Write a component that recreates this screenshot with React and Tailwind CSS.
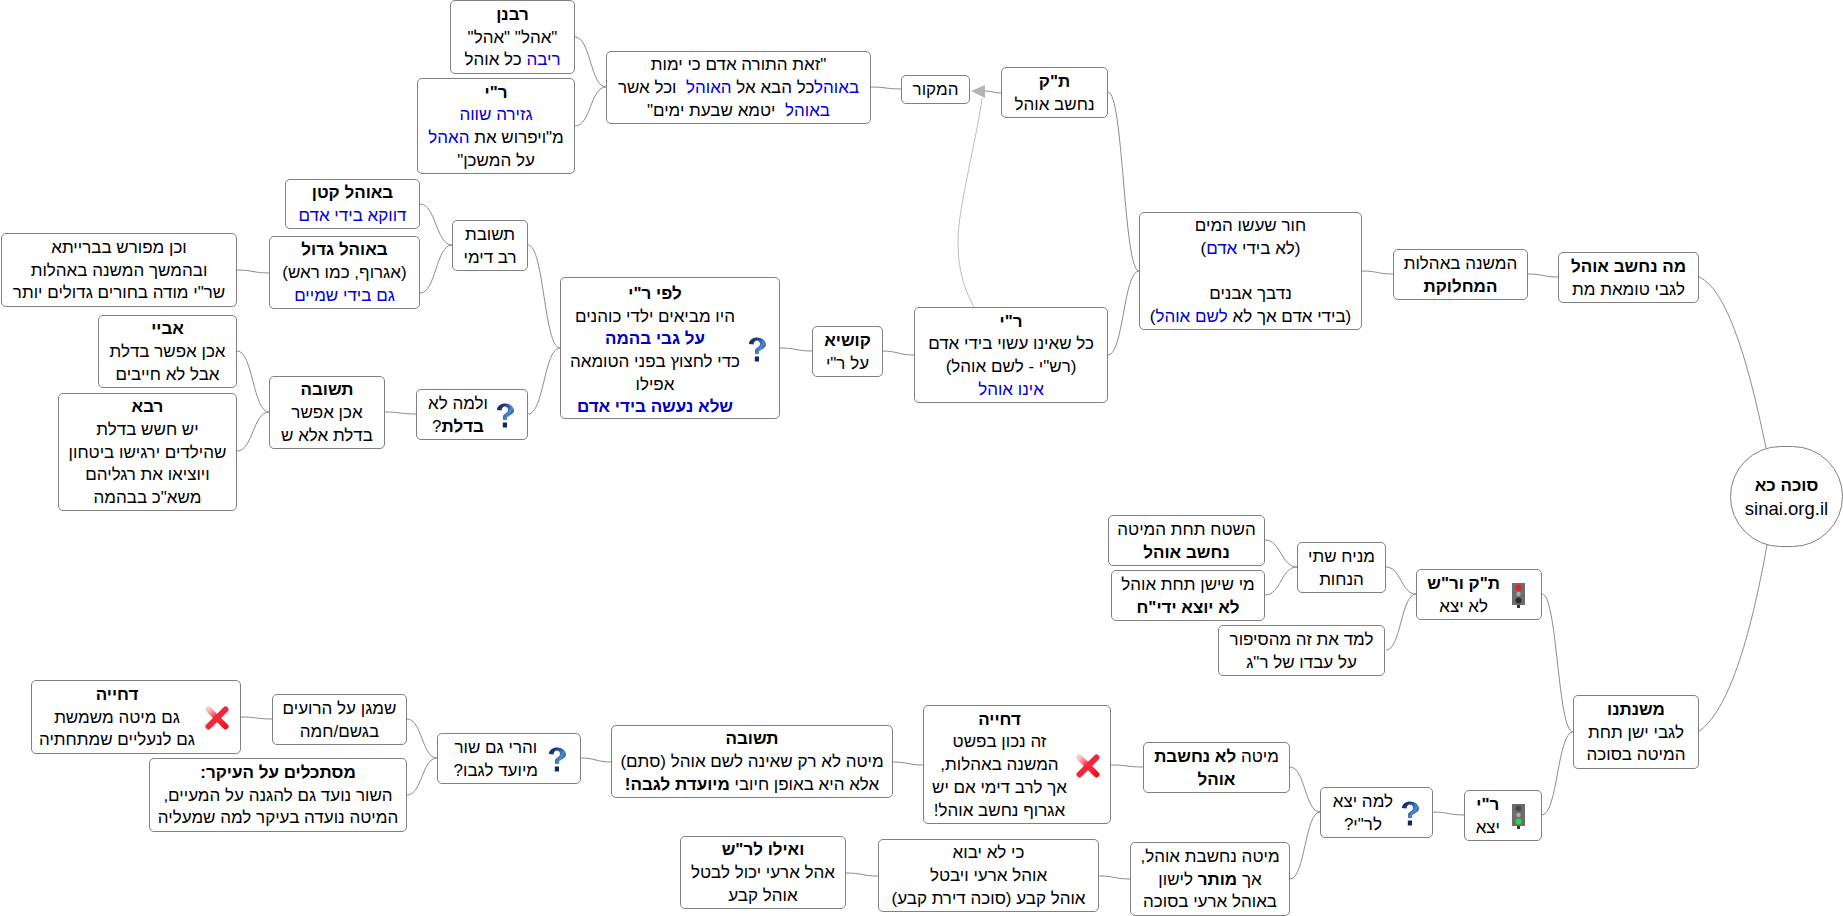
import React from 'react';

// child right edge -> parent left edge, at the mid height of each box
const links = [
  [575, 37, 606, 87], [575, 126, 606, 87], [871, 87, 901, 89],
  [1108, 92, 1139, 271], [1108, 355, 1139, 271], [1362, 271, 1393, 274], [1528, 274, 1558, 277],
  [780, 348, 812, 351], [882, 351, 914, 355],
  [528, 245, 560, 348], [528, 414, 560, 348],
  [420, 204, 452, 245], [420, 293, 452, 245], [237, 270, 269, 273],
  [385, 412, 416, 414], [237, 351, 269, 412], [237, 451, 269, 412],
  [1542, 594, 1573, 732], [1542, 815, 1573, 732],
  [1386, 567, 1416, 594], [1386, 650, 1416, 594],
  [1265, 540, 1297, 567], [1265, 595, 1297, 567],
  [1433, 812, 1464, 815], [1290, 767, 1320, 812], [1290, 879, 1320, 812],
  [1111, 765, 1143, 767], [893, 762, 923, 765], [581, 758, 611, 762],
  [407, 719, 437, 758], [407, 795, 437, 758], [241, 717, 272, 719],
  [1099, 876, 1130, 879], [846, 873, 878, 876],
];

const curve = ([x1, y1, x2, y2]) => {
  const c = (x2 - x1) * 0.5;
  return `M${x1} ${y1}C${x1 + c} ${y1} ${x2 - c} ${y2} ${x2} ${y2}`;
};

const Connectors = () => (
  <svg className="absolute left-0 top-0" width="1843" height="916" fill="none" stroke="#8c8c8c" strokeWidth="1">
    {links.map((l, i) => <path key={i} d={curve(l)} />)}
    <path d="M1699 277C1730 290 1752 380 1766 448" />
    <path d="M1698 732C1728 712 1750 640 1767 545" />
    <path d="M1001 93C993 93 992 91 984 91" />
    <path d="M974 307C960 282 956 255 959 225C963 190 978 130 982 98" stroke="#bdbdbd" />
    <polygon points="971,91 985,85 985,98" fill="#b4b4b4" stroke="none" />
  </svg>
);

const B = ({ children }) => <b className="font-bold">{children}</b>;
const Blue = ({ children }) => <span className="text-[#0000d8]">{children}</span>;
const BB = ({ children }) => <b className="font-bold text-[#0000c0]">{children}</b>;

const Question = () => (
  <svg width="18" height="25" viewBox="0 0 18 25" className="shrink-0">
    <defs>
      <linearGradient id="qm" x1="0" y1="0.1" x2="1" y2="0.7">
        <stop offset="0" stopColor="#10205a" />
        <stop offset="0.35" stopColor="#1f3f86" />
        <stop offset="0.75" stopColor="#4a8ccc" />
        <stop offset="1" stopColor="#1c3a80" />
      </linearGradient>
    </defs>
    <path d="M1 7C1 3 5 .5 9 .5C14 .5 18 3.5 18 7.5C18 11 13 12.5 11 14.5L11 17L7 17L7 13.5C7 11 12 10 12 7C12 5 10.5 3.5 9 3.5C7 3.5 6 5 5.5 7.5Z" fill="url(#qm)" />
    <rect x="6.8" y="19.5" width="4.2" height="5" fill="#16265f" />
  </svg>
);

const Cross = () => (
  <svg width="24" height="24" viewBox="0 0 24 24" className="shrink-0">
    <defs>
      <linearGradient id="xm" x1="0" y1="0" x2="1" y2="1">
        <stop offset="0" stopColor="#f9c4cc" />
        <stop offset="0.4" stopColor="#f5404f" />
        <stop offset="1" stopColor="#ee0f20" />
      </linearGradient>
    </defs>
    <path d="M3.5 3.5L20.5 20.5" stroke="url(#xm)" strokeWidth="6" strokeLinecap="round" />
    <path d="M20.5 3.5L3.5 20.5" stroke="#f2263a" strokeWidth="6" strokeLinecap="round" />
  </svg>
);

const Light = ({ on }) => (
  <svg width="13" height="25" viewBox="0 0 13 25" className="shrink-0">
    <rect x="0" y="0" width="13" height="22" fill="#6d6d70" />
    <rect x="5" y="22" width="3" height="3" fill="#333" />
    <circle cx="6.5" cy="4.5" r="3" fill={on === 'red' ? '#f01a24' : '#4a4a4c'} />
    <circle cx="6.5" cy="11" r="2.2" fill="#aaa" />
    <circle cx="6.5" cy="17.5" r="3" fill={on === 'green' ? '#22e03a' : '#2c2c2e'} />
  </svg>
);

const box = 'absolute flex items-center justify-center rounded-[5px] border border-[#808080] bg-white pt-[2px] text-center';
const iconBox = 'absolute flex items-center justify-start rounded-[5px] border border-[#808080] bg-white pt-[2px] text-center';

const App = () => (
  <div dir="rtl" className="relative h-[916px] w-[1843px] overflow-hidden bg-white font-['Liberation_Sans',Arial,sans-serif] text-[17px] leading-[22.67px] text-black">
    <Connectors />

    <div className={`${box} left-[450px] top-[0px] h-[74px] w-[125px]`}>
      <div><div><B>רבנן</B></div><div>"אהל" "אהל"</div><div><Blue>ריבה</Blue> כל אוהל</div></div>
    </div>
    <div className={`${box} left-[417px] top-[78px] h-[96px] w-[158px]`}>
      <div><div><B>ר"י</B></div><div><Blue>גזירה שווה</Blue></div><div>מ"ויפרוש את <Blue>האהל</Blue></div><div>על המשכן"</div></div>
    </div>
    <div className={`${box} left-[606px] top-[51px] h-[73px] w-[265px]`}>
      <div><div>"זאת התורה אדם כי ימות</div><div><Blue>באוהל</Blue>כל הבא אל <Blue>האוהל</Blue>&nbsp; וכל אשר</div><div><Blue>באוהל</Blue>&nbsp; יטמא שבעת ימים"</div></div>
    </div>
    <div className={`${box} left-[901px] top-[75px] h-[29px] w-[69px]`}>המקור</div>
    <div className={`${box} left-[1001px] top-[67px] h-[51px] w-[107px]`}>
      <div><div><B>ת"ק</B></div><div>נחשב אוהל</div></div>
    </div>
    <div className={`${box} left-[1139px] top-[212px] h-[118px] w-[223px]`}>
      <div><div>חור שעשו המים</div><div>(לא בידי <Blue>אדם</Blue>)</div><div>&nbsp;</div><div>נדבך אבנים</div><div>(בידי אדם אך לא <Blue>לשם אוהל</Blue>)</div></div>
    </div>
    <div className={`${box} left-[1393px] top-[249px] h-[51px] w-[135px]`}>
      <div><div>המשנה באהלות</div><div><B>המחלוקת</B></div></div>
    </div>
    <div className={`${box} left-[1558px] top-[252px] h-[51px] w-[141px]`}>
      <div><div><B>מה נחשב אוהל</B></div><div>לגבי טומאת מת</div></div>
    </div>
    <div className="absolute left-[1730px] top-[446px] flex h-[101px] w-[113px] items-center justify-center rounded-full border border-[#808080] bg-white pt-[2px] text-center">
      <div><div><B>סוכה כא</B></div><div className="text-[18.5px]">sinai.org.il</div></div>
    </div>

    <div className={`${box} left-[914px] top-[307px] h-[96px] w-[194px]`}>
      <div><div><B>ר"י</B></div><div>כל שאינו עשוי בידי אדם</div><div>(רש"י - לשם אוהל)</div><div><Blue>אינו אוהל</Blue></div></div>
    </div>
    <div className={`${box} left-[812px] top-[326px] h-[51px] w-[71px]`}>
      <div><div><B>קושיא</B></div><div>על ר"י</div></div>
    </div>
    <div className={`${iconBox} left-[560px] top-[277px] h-[142px] w-[220px] gap-[8px] pr-[13px]`}>
      <Question />
      <div className="pt-[4px]"><div><B>לפי ר"י</B></div><div>היו מביאים ילדי כוהנים</div><div><BB>על גבי בהמה</BB></div><div>כדי לחצוץ בפני הטומאה</div><div>אפילו</div><div><BB>שלא נעשה בידי אדם</BB></div></div>
    </div>
    <div className={`${box} left-[452px] top-[220px] h-[51px] w-[76px]`}>
      <div><div>תשובת</div><div>רב דימי</div></div>
    </div>
    <div className={`${box} left-[285px] top-[179px] h-[50px] w-[135px]`}>
      <div><div><B>באוהל קטן</B></div><div><Blue>דווקא בידי אדם</Blue></div></div>
    </div>
    <div className={`${box} left-[269px] top-[236px] h-[73px] w-[151px]`}>
      <div><div><B>באוהל גדול</B></div><div>(אגרוף, כמו ראש)</div><div><Blue>גם בידי שמיים</Blue></div></div>
    </div>
    <div className={`${box} left-[1px] top-[233px] h-[74px] w-[236px]`}>
      <div><div>וכן מפורש בברייתא</div><div>ובהמשך המשנה באהלות</div><div>שר"י מודה בחורים גדולים יותר</div></div>
    </div>
    <div className={`${iconBox} left-[416px] top-[389px] h-[51px] w-[112px] gap-[8px] pr-[13px]`}>
      <Question />
      <div><div>ולמה לא</div><div><B>בדלת</B>?</div></div>
    </div>
    <div className={`${box} left-[269px] top-[376px] h-[73px] w-[116px]`}>
      <div><div><B>תשובה</B></div><div>אכן אפשר</div><div>בדלת אלא ש</div></div>
    </div>
    <div className={`${box} left-[98px] top-[315px] h-[73px] w-[139px]`}>
      <div><div><B>אביי</B></div><div>אכן אפשר בדלת</div><div>אבל לא חייבים</div></div>
    </div>
    <div className={`${box} left-[58px] top-[393px] h-[118px] w-[179px]`}>
      <div><div><B>רבא</B></div><div>יש חשש בדלת</div><div>שהילדים ירגישו ביטחון</div><div>ויוציאו את רגליהם</div><div>משא"כ בבהמה</div></div>
    </div>

    <div className={`${box} left-[1573px] top-[695px] h-[74px] w-[126px]`}>
      <div><div><B>משנתנו</B></div><div>לגבי ישן תחת</div><div>המיטה בסוכה</div></div>
    </div>
    <div className={`${iconBox} left-[1416px] top-[569px] h-[51px] w-[126px] gap-[12px] pr-[16px]`}>
      <Light on="red" />
      <div><div><B>ת"ק ור"ש</B></div><div>לא יצא</div></div>
    </div>
    <div className={`${box} left-[1297px] top-[542px] h-[51px] w-[89px]`}>
      <div><div>מניח שתי</div><div>הנחות</div></div>
    </div>
    <div className={`${box} left-[1108px] top-[515px] h-[51px] w-[157px]`}>
      <div><div>השטח תחת המיטה</div><div><B>נחשב אוהל</B></div></div>
    </div>
    <div className={`${box} left-[1111px] top-[570px] h-[51px] w-[154px]`}>
      <div><div>מי שישן תחת אוהל</div><div><B>לא יוצא ידי"ח</B></div></div>
    </div>
    <div className={`${box} left-[1218px] top-[625px] h-[51px] w-[167px]`}>
      <div><div>למד את זה מהסיפור</div><div>על עבדו של ר"ג</div></div>
    </div>
    <div className={`${iconBox} left-[1464px] top-[790px] h-[51px] w-[78px] gap-[12px] pr-[16px]`}>
      <Light on="green" />
      <div><div><B>ר"י</B></div><div>יצא</div></div>
    </div>
    <div className={`${iconBox} left-[1320px] top-[787px] h-[51px] w-[113px] gap-[8px] pr-[13px]`}>
      <Question />
      <div><div>למה יצא</div><div>לר"י?</div></div>
    </div>
    <div className={`${box} left-[1143px] top-[742px] h-[51px] w-[147px]`}>
      <div><div>מיטה <B>לא נחשבת</B></div><div><B>אוהל</B></div></div>
    </div>
    <div className={`${box} left-[1130px] top-[842px] h-[74px] w-[160px]`}>
      <div><div>מיטה נחשבת אוהל,</div><div>אך <B>מותר</B> לישון</div><div>באוהל ארעי בסוכה</div></div>
    </div>
    <div className={`${iconBox} left-[923px] top-[705px] h-[119px] w-[188px] gap-[9px] pr-[10px]`}>
      <Cross />
      <div><div><B>דחייה</B></div><div>זה נכון בפשט</div><div>המשנה באהלות,</div><div>אך לרב דימי אם יש</div><div>אגרוף נחשב אוהל!</div></div>
    </div>
    <div className={`${box} left-[878px] top-[839px] h-[73px] w-[221px]`}>
      <div><div>כי לא יבוא</div><div>אוהל ארעי ויבטל</div><div>אוהל קבע (סוכה דירת קבע)</div></div>
    </div>
    <div className={`${box} left-[680px] top-[836px] h-[73px] w-[166px]`}>
      <div><div><B>ואילו לר"ש</B></div><div>אהל ארעי יכול לבטל</div><div>אוהל קבע</div></div>
    </div>
    <div className={`${box} left-[611px] top-[725px] h-[73px] w-[282px]`}>
      <div><div><B>תשובה</B></div><div>מיטה לא רק שאינה לשם אוהל (סתם)</div><div>אלא היא באופן חיובי <B>מיועדת לגבה!</B></div></div>
    </div>
    <div className={`${iconBox} left-[437px] top-[733px] h-[51px] w-[144px] gap-[10px] pr-[14px]`}>
      <Question />
      <div><div>והרי גם שור</div><div>מיועד לגבו?</div></div>
    </div>
    <div className={`${box} left-[272px] top-[694px] h-[51px] w-[135px]`}>
      <div><div>שמגן על הרועים</div><div>בגשם/חמה</div></div>
    </div>
    <div className={`${iconBox} left-[31px] top-[680px] h-[74px] w-[210px] gap-[10px] pr-[11px]`}>
      <Cross />
      <div><div><B>דחייה</B></div><div>גם מיטה משמשת</div><div>גם לנעליים שמתחתיה</div></div>
    </div>
    <div className={`${box} left-[149px] top-[758px] h-[74px] w-[258px]`}>
      <div><div><B>מסתכלים על העיקר:</B></div><div>השור נועד גם להגנה על המעיים,</div><div>המיטה נועדה בעיקר למה שמעליה</div></div>
    </div>
  </div>
);

export default App;
